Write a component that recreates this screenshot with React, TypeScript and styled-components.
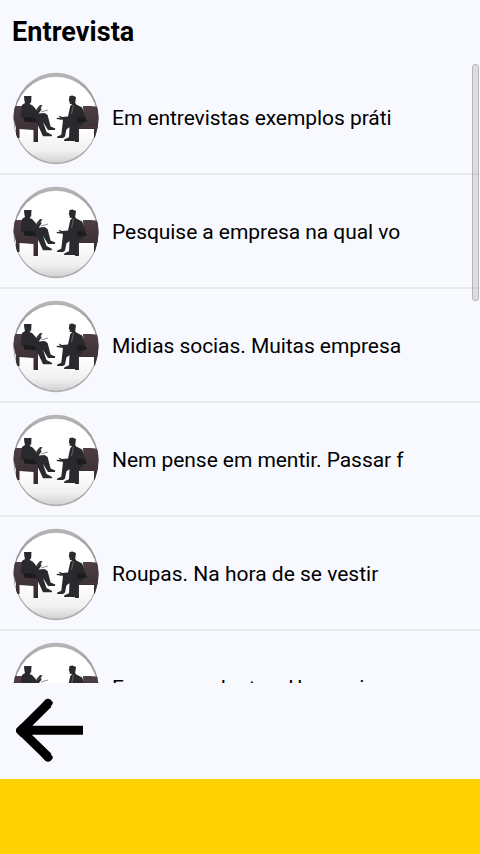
import React from "react";
import styled, { createGlobalStyle } from "styled-components";

const GlobalStyle = createGlobalStyle`
  * { box-sizing: border-box; }
  body { margin: 0; background: #f8f9ff; }
`;

const Screen = styled.div`
  display: flex;
  flex-direction: column;
  width: 100%;
  height: 854px;
  overflow: hidden;
  background: #f8f9ff;
  color: #000;
  font-family: Roboto, "Liberation Sans", sans-serif;
`;

const Title = styled.h1`
  flex: none;
  height: 61px;
  margin: 0;
  padding: 16px 12px 0;
  font-size: 27px;
  line-height: 32px;
  font-weight: 700;
  letter-spacing: 0.06px;
`;

const ListArea = styled.main`
  position: relative;
  flex: none;
  height: 622px;
  overflow: hidden;
`;

const List = styled.ul`
  margin: 0;
  padding: 0;
  list-style: none;
`;

const Row = styled.li`
  display: flex;
  align-items: center;
  height: 114px;
  padding-left: 12px;
  border-bottom: 2px solid #e9eaed;
`;

const Picture = styled.svg`
  flex: none;
  width: 88px;
  height: 96px;
  margin-top: 4px;
`;

const Label = styled.span<{ $tracking?: number }>`
  margin-left: 12px;
  padding-top: 2px;
  font-size: 21px;
  line-height: 26px;
  letter-spacing: ${({ $tracking = -0.06 }) => $tracking}px;
  white-space: pre;
`;

const ScrollThumb = styled.div`
  position: absolute;
  top: 3px;
  right: 1px;
  width: 7px;
  height: 237px;
  border: 1px solid rgba(100, 95, 100, 0.3);
  border-radius: 4px;
  background: rgba(130, 120, 125, 0.22);
`;

const Navigation = styled.nav`
  flex: none;
  height: 96px;
`;

const BackButton = styled.button`
  display: block;
  width: 96px;
  height: 96px;
  padding: 0;
  border: 0;
  background: transparent;
`;

const Banner = styled.footer`
  flex: 1;
  background: #ffd203;
`;

const tips: { text: string; tracking?: number }[] = [
  { text: "Em entrevistas exemplos práti" },
  { text: "Pesquise a empresa na qual vo" },
  { text: "Midias socias. Muitas empresa" },
  { text: "Nem pense em mentir. Passar f" },
  { text: "Roupas. Na hora de se vestir ", tracking: 0 },
  { text: "Em nossas lentes. Use mais", tracking: 0.04 },
];

function Interview({ id }: { id: string }) {
  return (
    <Picture viewBox="0 0 88 96" aria-hidden="true">
      <defs>
        <linearGradient id={`${id}-fill`} x2="0" y2="1">
          <stop offset="0.6" stopColor="#fff" />
          <stop offset="0.86" stopColor="#f0f0f0" />
          <stop offset="1" stopColor="#d2d2d2" />
        </linearGradient>
        <linearGradient id={`${id}-rim`} x2="0" y2="1">
          <stop stopColor="#b7b7b7" />
          <stop offset="0.5" stopColor="#858585" />
          <stop offset="1" stopColor="#b2b2b2" />
        </linearGradient>
        <linearGradient id={`${id}-chair`} x2="0" y2="1">
          <stop stopColor="#4f3e44" />
          <stop offset="1" stopColor="#33292e" />
        </linearGradient>
        <clipPath id={`${id}-clip`}>
          <ellipse cx="44" cy="47.5" rx="42.6" ry="45.8" />
        </clipPath>
        <filter id={`${id}-soft`} x="-5%" y="-5%" width="110%" height="110%">
          <feGaussianBlur stdDeviation="0.55" />
        </filter>
      </defs>
      <ellipse cx="44" cy="47.5" rx="42.6" ry="45.8" fill={`url(#${id}-rim)`} />
      <ellipse cx="44" cy="48.7" rx="41.7" ry="42.9" fill={`url(#${id}-fill)`} />
      <g clipPath={`url(#${id}-clip)`}>
        <g filter={`url(#${id}-soft)`}>
          <path fill={`url(#${id}-chair)`} d="M0 36l4-1h6l2 9 11 2 3 4v21h-4.5V59L7.5 58v9H4V57L1 45zM71 35h8l9 1-1 11-2 20h-3v-9H67v13h-4l-.5-19 4-5 5-2z" />
          <path fill={`url(#${id}-chair)`} d="M66 57l18-1v2H66z" />
          <path fill="#292c2d" d="M12 25h7.5l-.3 6-1.6 2 3 1.5 4.4 5 4-2.5.6 1.5-3 4 6-.5 3 2 3 11.5 4.7 2-.4 1.5H36l-5-8 3.5 10 5.7 3-.5 1.3H31l-7-15-12-2-3.5-2L10 34l3-2-.7-3zM57.5 25l3-.5 3.5 1.5-.8 6 1 1.5 6 3 3.5 10-3 7-5 4-1 12.5H52l.5-1.8 4.5-2 .5-10-3 2L53 65.5l-2 1.5h-6l.3-1.5 4-1.7L51 49l-6.5-1 .5-1.2 3 .2-1.5-2.5L50 46l6-.5 2.3-10.5 2-2-2.8-.3.3-2-1-1z" />
          <path fill="#323536" d="M24.5 38l3.5-4 2.5.3L28 38l-3 1.7z" />
          <path fill="#1b1c1f" d="M12 46l10 .5 3 4-2 1-11-1zM65 46l8 .5 2 4-7 1.3-3-1z" />
          <path stroke="#747474" strokeWidth="0.8" fill="none" d="M29 41l7-2M61.5 34l-2 9M48 48l3 1" />
        </g>
      </g>
    </Picture>
  );
}

export default function App() {
  return (
    <>
      <GlobalStyle />
      <Screen>
        <Title>Entrevista</Title>
        <ListArea>
          <List>
            {tips.map(({ text, tracking }, index) => (
              <Row key={text}>
                <Interview id={`tip-${index}`} />
                <Label $tracking={tracking}>{text}</Label>
              </Row>
            ))}
          </List>
          <ScrollThumb />
        </ListArea>
        <Navigation>
          <BackButton aria-label="Voltar">
            <svg width="96" height="96" viewBox="0 0 96 96" aria-hidden="true">
              <path d="M83 47.3H26M48.3 20.5L21 47.5l27.3 26.5" fill="none" stroke="#000" strokeWidth="9" strokeLinejoin="round" />
              <path d="M45 17q3-2.7 6 0l1.6 2q1 1.4-1.6 4l-5 4-5-5zM45 77.5q3 2.7 6 0l1.6-2q1-1.4-1.6-4l-5-4-5 5zM16 46l5-5 9 4v5l-9 4-5-5z" />
            </svg>
          </BackButton>
        </Navigation>
        <Banner />
      </Screen>
    </>
  );
}
